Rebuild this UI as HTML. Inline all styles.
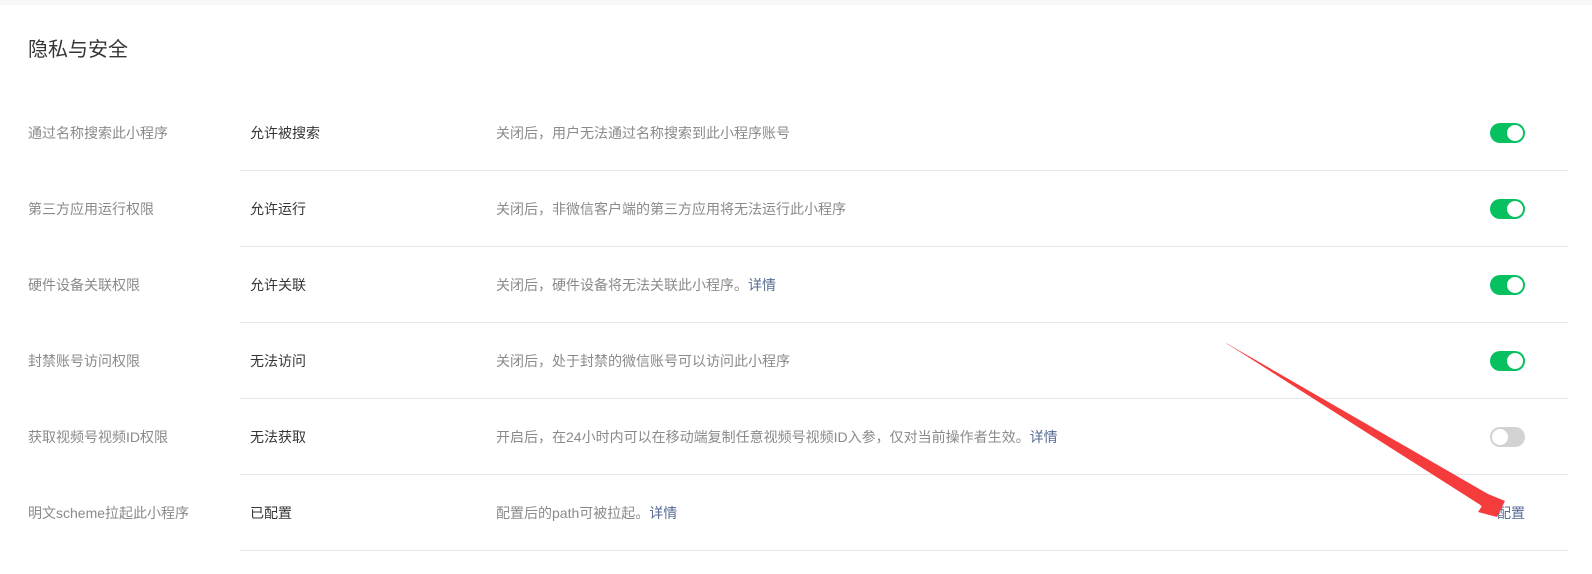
<!DOCTYPE html>
<html><head><meta charset="utf-8"><style>
body{margin:0;width:1592px;height:574px;background:#fff;font-family:"Liberation Sans","Noto Sans CJK SC",sans-serif;position:relative;overflow:hidden}
.top{position:absolute;left:0;top:0;width:1592px;height:5px;background:#f6f7f9}
h1{position:absolute;left:28px;top:36px;margin:0;font-size:20px;font-weight:normal;color:#353535;line-height:28px}
.row{position:absolute;left:0;width:1592px;height:76px}
.line{position:absolute;left:240px;width:1328px;bottom:0;height:1px;background:#e7e7eb}
.c{position:absolute;top:0;line-height:76px;font-size:14px}
.a{left:28px;color:#8a8a8a}.b{left:250px;color:#353535}.d{left:496px;color:#8a8a8a}
a{color:#576b95;text-decoration:none}
.sw{position:absolute;left:1490px;top:28px;width:35px;height:20px;border-radius:10px;background:#07c160}
.sw::after{content:"";position:absolute;right:2px;top:2px;width:16px;height:16px;border-radius:50%;background:#fff}
.sw.off{background:#d2d2d2}.sw.off::after{right:auto;left:2px}
.cfg{position:absolute;right:67px;top:0;line-height:76px;font-size:14px;color:#576b95}
</style></head><body>
<div class="top"></div>
<h1>隐私与安全</h1>
<div class="row" style="top:95px"><span class="c a">通过名称搜索此小程序</span><span class="c b">允许被搜索</span><span class="c d">关闭后，用户无法通过名称搜索到此小程序账号</span><div class="sw"></div><div class="line"></div></div>
<div class="row" style="top:171px"><span class="c a">第三方应用运行权限</span><span class="c b">允许运行</span><span class="c d">关闭后，非微信客户端的第三方应用将无法运行此小程序</span><div class="sw"></div><div class="line"></div></div>
<div class="row" style="top:247px"><span class="c a">硬件设备关联权限</span><span class="c b">允许关联</span><span class="c d">关闭后，硬件设备将无法关联此小程序。<a>详情</a></span><div class="sw"></div><div class="line"></div></div>
<div class="row" style="top:323px"><span class="c a">封禁账号访问权限</span><span class="c b">无法访问</span><span class="c d">关闭后，处于封禁的微信账号可以访问此小程序</span><div class="sw"></div><div class="line"></div></div>
<div class="row" style="top:399px"><span class="c a">获取视频号视频ID权限</span><span class="c b">无法获取</span><span class="c d">开启后，在24小时内可以在移动端复制任意视频号视频ID入参，仅对当前操作者生效。<a>详情</a></span><div class="sw off"></div><div class="line"></div></div>
<div class="row" style="top:475px"><span class="c a">明文scheme拉起此小程序</span><span class="c b">已配置</span><span class="c d">配置后的path可被拉起。<a>详情</a></span><span class="cfg">配置</span><div class="line"></div></div>
<svg style="position:absolute;left:0;top:0" width="1592" height="574">
<polygon points="1226,343 1484,500 1487,496 1227,344" fill="#f53c3c"/>
<polygon points="1480,505 1497,517 1490,502" fill="#f53c3c"/>
<polygon points="1226,343 1488,494 1505,501 1497,517 1478,512 1482,506" fill="#f53c3c"/>
</svg>
</body></html>
